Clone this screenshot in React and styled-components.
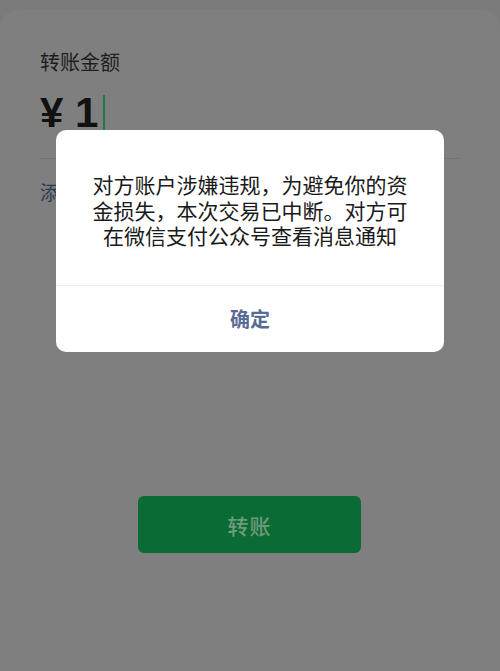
import React from "react";
import styled, { createGlobalStyle } from "styled-components";

const GlobalStyle = createGlobalStyle`
  html, body {
    margin: 0;
    padding: 0;
    background: #7b7b7b;
  }
  body {
    font-family: "Noto Sans CJK SC", "Noto Sans", "Liberation Sans", sans-serif;
  }
`;

const Page = styled.div`
  position: relative;
  width: 500px;
  height: 671px;
  overflow: hidden;
  background: #7b7b7b;
  padding-top: 10px;
  box-sizing: border-box;
`;

const Card = styled.div`
  height: 100%;
  background: #7f7f7f;
  border-radius: 18px 18px 0 0;
  padding: 40px 40px 0;
  box-sizing: border-box;
  display: flex;
  flex-direction: column;
`;

const Label = styled.div`
  font-size: 20px;
  line-height: 24px;
  color: #1e1e1e;
`;

const AmountRow = styled.div`
  display: flex;
  align-items: center;
  height: 48px;
  margin-top: 15px;
`;

const Amount = styled.span`
  font-family: "Liberation Sans", Arial, sans-serif;
  font-weight: 700;
  font-size: 42px;
  line-height: 48px;
  color: #111;
`;

const Cursor = styled.span`
  display: inline-block;
  width: 2px;
  height: 36px;
  margin-left: 5px;
  background: #1f7a4a;
`;

const Divider = styled.div`
  height: 1px;
  background: #737373;
  margin-top: 21px;
`;

const Link = styled.div`
  margin-top: 21px;
  font-size: 19px;
  line-height: 24px;
  color: #2b3a55;
`;

const SubmitButton = styled.button`
  align-self: center;
  width: 223px;
  height: 57px;
  margin-top: 292px;
  margin-left: -1px;
  border: none;
  border-radius: 6px;
  background: #0b6b35;
  color: #6f9a7c;
  font-family: inherit;
  font-size: 21px;
  font-weight: 500;
  letter-spacing: 1px;
`;

const Dialog = styled.div`
  position: absolute;
  top: 130px;
  left: 56px;
  width: 388px;
  background: #fff;
  border-radius: 10px;
  overflow: hidden;
`;

const DialogBody = styled.div`
  padding: 42px 35px 36px;
  font-size: 21px;
  line-height: 25.5px;
  color: #1a1a1a;
  text-align: center;
`;

const DialogAction = styled.div`
  height: 66px;
  border-top: 1px solid #ececec;
  display: flex;
  align-items: center;
  justify-content: center;
  font-size: 20px;
  font-weight: 700;
  color: #576b95;
`;

export default function App() {
  return (
    <Page>
      <GlobalStyle />
      <Card>
        <Label>转账金额</Label>
        <AmountRow>
          <Amount>¥ 1</Amount>
          <Cursor />
        </AmountRow>
        <Divider />
        <Link>添加转账说明</Link>
        <SubmitButton>转账</SubmitButton>
      </Card>
      <Dialog>
        <DialogBody>
          对方账户涉嫌违规，为避免你的资金损失，本次交易已中断。对方可在微信支付公众号查看消息通知
        </DialogBody>
        <DialogAction>确定</DialogAction>
      </Dialog>
    </Page>
  );
}
